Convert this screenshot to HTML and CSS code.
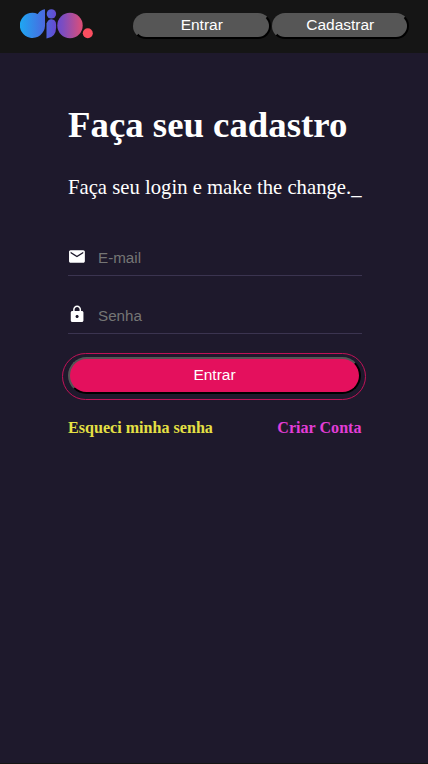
FILE: index.html
```html
<!DOCTYPE html>
<html lang="pt-BR">
<head>
<meta charset="utf-8">
<title>Cadastro</title>
<link rel="stylesheet" href="styles.css">
</head>
<body>
<header class="header">
  <svg class="logo" width="74" height="31" viewBox="0 0 74 31" role="img" aria-label="dio">
    <defs>
      <linearGradient id="brand" gradientUnits="userSpaceOnUse" x1="0" y1="0" x2="74" y2="0">
        <stop offset="0" stop-color="#1ea7f2"/>
        <stop offset=".33" stop-color="#4a6ae0"/>
        <stop offset=".48" stop-color="#654bd2"/>
        <stop offset=".58" stop-color="#7d4dc0"/>
        <stop offset=".84" stop-color="#dc4e78"/>
        <stop offset="1" stop-color="#ff4e5c"/>
      </linearGradient>
    </defs>
    <g fill="url(#brand)">
      <path d="M25 .3V17A12.600 12.600 0 1 1 17.700 4.900Q20.500 .8 25 .3Z"/>
      <circle cx="31.400" cy="4.900" r="4.700"/>
      <path d="M26.500 29.500V14.500Q28 10.200 31.400 10.200Q36.100 10.600 36.100 15.500V18.500Q36.100 28.500 26.500 29.500Z"/>
      <circle cx="50" cy="16.500" r="12.700"/>
    </g>
    <circle cx="67.800" cy="24.200" r="5" fill="#fb4e60"/>
  </svg>
  <nav class="nav">
    <button class="nav-button">Entrar</button>
    <button class="nav-button">Cadastrar</button>
  </nav>
</header>
<main class="content">
  <h1 class="title">Faça seu cadastro</h1>
  <p class="subtitle">Faça seu login e make the change._</p>
  <form class="form">
    <label class="field">
      <svg class="icon" width="19" height="19" viewBox="0.700 0 24 24"><path fill="#fff" d="M20 4H4c-1.100 0-2 .9-2 2v12c0 1.100.9 2 2 2h16c1.100 0 2-.9 2-2V6c0-1.100-.9-2-2-2zm0 4-8 5-8-5V6l8 5 8-5v2z"/></svg>
      <input class="input" type="email" placeholder="E-mail">
    </label>
    <label class="field">
      <svg class="icon" width="19" height="19" viewBox="0.500 0.500 24 24"><path fill="#fff" d="M18 8h-1V6c0-2.760-2.240-5-5-5S7 3.240 7 6v2H6c-1.100 0-2 .9-2 2v10c0 1.100.9 2 2 2h12c1.100 0 2-.9 2-2V10c0-1.100-.9-2-2-2zm-6 9c-1.100 0-2-.9-2-2s.9-2 2-2 2 .9 2 2-.9 2-2 2zm3.100-9H8.900V6c0-1.710 1.390-3.100 3.100-3.100s3.100 1.390 3.100 3.100v2z"/></svg>
      <input class="input" type="password" placeholder="Senha">
    </label>
    <button class="submit" type="button">Entrar</button>
  </form>
  <div class="links">
    <span class="forgot">Esqueci minha senha</span>
    <span class="create">Criar Conta</span>
  </div>
</main>
</body>
</html>
```
FILE: styles.css
```css
*,
*::after {
  box-sizing: border-box;
}

body {
  margin: 0;
  min-height: 764px;
  background: #1e192c;
  border-bottom: 1px solid #151515;
  color: #fff;
  font-family: "Liberation Serif", "Times New Roman", serif;
}

.header {
  display: flex;
  justify-content: space-between;
  height: 53px;
  padding: 9px 19px 0 20px;
  background: #151515;
}

.logo {
  flex: none;
}

.nav {
  display: flex;
  gap: 1px;
  padding-top: 4px;
}

.nav-button {
  width: 137.500px;
  height: 26px;
  padding: 0 0 3px;
  border: 2px solid;
  border-color: #565656 #000 #000 #565656;
  border-radius: 13px;
  background: #565656;
  color: #fff;
  font: 15.500px "Liberation Sans", Arial, sans-serif;
}

.content {
  width: 293.500px;
  margin: 0 0 0 68px;
  padding-top: 50px;
}

.title {
  margin: 0;
  font-size: 36.800px;
  line-height: 43px;
  white-space: nowrap;
}

.subtitle {
  margin: 29px 0 0;
  font-size: 20.700px;
  line-height: 24px;
  white-space: nowrap;
}

.field {
  display: flex;
  align-items: center;
  height: 34px;
  margin-bottom: 24px;
  padding-bottom: 4px;
  border-bottom: 1px solid #3b3450;
}

.form {
  padding-top: 43px;
}

.icon {
  flex: none;
  margin-right: 11px;
}

.input {
  width: 100%;
  min-width: 0;
  padding: 2px 0 0;
  border: 0;
  outline: 0;
  background: transparent;
  color: #fff;
  font: 15.200px "Liberation Sans", Arial, sans-serif;
}

.input::placeholder {
  color: #757575;
}

.submit {
  position: relative;
  display: block;
  width: 293px;
  height: 37px;
  margin-top: -1px;
  padding: 0 0 1px;
  border: 2px solid;
  border-color: #565656 #000 #000 #565656;
  border-radius: 22px;
  background: #e4105d;
  color: #fff;
  font: 15.500px "Liberation Sans", Arial, sans-serif;
}

.submit::after {
  content: "";
  position: absolute;
  top: -6px;
  left: -8px;
  width: 304px;
  height: 47px;
  border: 1px solid #c11257;
  border-radius: 24px;
}

.links {
  display: flex;
  justify-content: space-between;
  margin-top: 24px;
  font-size: 16.100px;
  font-weight: bold;
  line-height: 19px;
}

.forgot {
  color: #e5e044;
}

.create {
  color: #e23dd7;
}
```
